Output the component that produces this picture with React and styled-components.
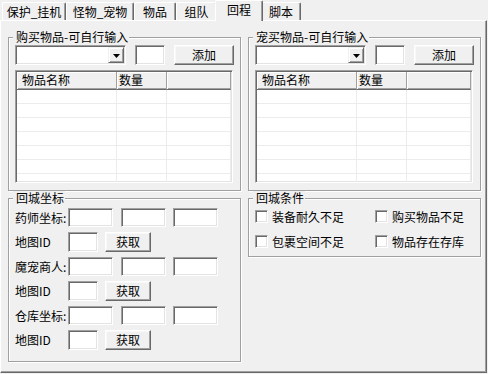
import React from 'react';
import styled, { createGlobalStyle, css } from 'styled-components';

const GlobalStyle = createGlobalStyle`
  html, body { margin: 0; padding: 0; background: #f0f0f0; }
  body {
    font-family: "Noto Sans CJK SC", "Liberation Sans", sans-serif;
    font-size: 12px;
    color: #000;
  }
  * { box-sizing: border-box; }
`;

const Window = styled.div`
  width: 488px;
  height: 374px;
  background: #f0f0f0;
  display: flex;
  flex-direction: column;
  overflow: hidden;
`;

const TabBar = styled.div`
  flex: none;
  display: flex;
  align-items: flex-end;
  height: 20px;
  padding-left: 2px;
`;

const Tab = styled.div`
  flex: none;
  width: ${(p) => p.$w}px;
  height: 18px;
  display: flex;
  align-items: center;
  justify-content: center;
  line-height: 14px;
  white-space: nowrap;
  border-top: 1px solid #fff;
  border-left: 1px solid #fff;
  border-right: 1px solid #696969;
  border-radius: 2px 2px 0 0;
  box-shadow: inset -1px 0 #a0a0a0;
  background: #f0f0f0;
  ${(p) =>
    p.$active &&
    css`
      position: relative;
      z-index: 1;
      width: ${p.$w + 4}px;
      height: 21px;
      margin: 0 -2px -1px;
      padding-bottom: 3px;
    `}
`;

const Panel = styled.div`
  flex: 1;
  margin: 0 1px 1px 0;
  border-top: 1px solid #fff;
  border-left: 1px solid #fff;
  border-right: 1px solid #696969;
  border-bottom: 1px solid #696969;
  box-shadow: inset -1px -1px #a0a0a0;
  padding: 9px 0 0 7px;
  display: grid;
  grid-template-columns: 233px 233px;
  column-gap: 7px;
  align-content: start;
  align-items: start;
`;

const Column = styled.div`
  display: flex;
  flex-direction: column;
`;

const Group = styled.fieldset`
  margin: 0;
  min-width: 0;
  border: 1px solid #a0a0a0;
  box-shadow: inset 1px 1px #fff, 1px 1px #fff;
  padding: ${(p) => p.$pad};
`;

const Legend = styled.legend`
  margin-left: -2px;
  padding: 0 1px 0 3px;
  line-height: 14px;
  background: #f0f0f0;
  white-space: nowrap;
`;

const AddRow = styled.div`
  display: flex;
  align-items: center;
  height: 20px;
  gap: 9px;
`;

const sunken = css`
  border: 1px solid;
  border-color: #a0a0a0 #fff #fff #a0a0a0;
  box-shadow: inset 1px 1px #696969, inset -1px -1px #e3e3e3;
  background: #fff;
`;

const raised = css`
  border: 1px solid;
  border-color: #fff #696969 #696969 #fff;
  box-shadow: inset -1px -1px #a0a0a0, inset 1px 1px #f8f8f8;
  background: #f0f0f0;
`;

const Combo = styled.div`
  ${sunken};
  flex: none;
  width: 111px;
  height: 20px;
  padding: 1px;
  display: flex;
  justify-content: flex-end;
`;

const DropBtn = styled.div`
  border: 1px solid;
  border-color: #f0f0f0 #696969 #696969 #f0f0f0;
  box-shadow: inset 1px 1px #fff, inset -1px -1px #a0a0a0;
  background: #f0f0f0;
  width: 16px;
  height: 16px;
  display: flex;
  align-items: center;
  justify-content: center;
  padding-top: 1px;
`;

const Field = styled.input`
  ${sunken};
  flex: none;
  width: ${(p) => p.$w}px;
  height: ${(p) => p.$h || 20}px;
  padding: 0 3px;
  margin: 0;
  font: inherit;
  outline: none;
`;

const Button = styled.button`
  ${raised};
  flex: none;
  width: ${(p) => p.$w}px;
  height: 20px;
  margin: 0;
  padding: 0 0 1px;
  font: inherit;
  line-height: 14px;
  color: #000;
`;

const ListView = styled.div`
  ${sunken};
  margin-top: 5px;
  height: 113px;
  padding: 1px;
  overflow: hidden;
`;

const cols = css`
  display: grid;
  grid-template-columns: 100px 50px 1fr;
`;

const HeaderRow = styled.div`
  ${cols};
  height: 18px;
`;

const HeaderCell = styled.div`
  background: #f0f0f0;
  border-right: 1px solid #a0a0a0;
  border-bottom: 1px solid #696969;
  box-shadow: inset 1px 1px #fff, inset 0 -1px #a0a0a0;
  padding: 1px 0 0 ${(p) => p.$indent}px;
  line-height: 14px;
  white-space: nowrap;
`;

const BodyRow = styled.div`
  ${cols};
  height: 14px;
  border-bottom: 1px solid #ececec;
`;

const BodyCell = styled.div`
  border-right: 1px solid #ececec;
`;

const Rows = styled.div`
  display: flex;
  flex-direction: column;
  gap: 5px;
`;

const FormRow = styled.div`
  display: flex;
  align-items: center;
  height: ${(p) => p.$h}px;
  gap: ${(p) => p.$gap}px;
`;

const Label = styled.span`
  flex: none;
  width: 53px;
  margin-right: ${(p) => -p.$gap}px;
  line-height: 14px;
  white-space: nowrap;
`;

const CheckGrid = styled.div`
  display: grid;
  grid-template-columns: 120px 1fr;
  row-gap: 12px;
`;

const Check = styled.label`
  display: flex;
  align-items: center;
  gap: 4px;
  height: 13px;
  line-height: 13px;
  white-space: nowrap;
`;

const Box = styled.span`
  ${sunken};
  flex: none;
  width: 13px;
  height: 13px;
`;

const tabs = [
  { label: '保护_挂机', w: 64 },
  { label: '怪物_宠物', w: 68 },
  { label: '物品', w: 42 },
  { label: '组队', w: 41 },
  { label: '回程', w: 44, active: true },
  { label: '脚本', w: 40 },
];

function ItemBox({ title }) {
  return (
    <Group $pad="1px 7px 7px 6px">
      <Legend>{title}</Legend>
      <AddRow>
        <Combo>
          <DropBtn>
            <svg width="7" height="4" viewBox="0 0 7 4">
              <path d="M0 0h7L3.5 4z" fill="#000" />
            </svg>
          </DropBtn>
        </Combo>
        <Field $w={30} />
        <Button $w={60}>添加</Button>
      </AddRow>
      <ListView>
        <HeaderRow>
          <HeaderCell $indent={5}>物品名称</HeaderCell>
          <HeaderCell $indent={2}>数量</HeaderCell>
          <HeaderCell $indent={2} />
        </HeaderRow>
        {Array.from({ length: 7 }).map((_, i) => (
          <BodyRow key={i}>
            <BodyCell />
            <BodyCell />
            <BodyCell />
          </BodyRow>
        ))}
      </ListView>
    </Group>
  );
}

function CoordRow({ label }) {
  return (
    <FormRow $h={19} $gap={7.5}>
      <Label $gap={7.5}>{label}</Label>
      <Field $w={45} $h={19} />
      <Field $w={45} $h={19} />
      <Field $w={45} $h={19} />
    </FormRow>
  );
}

function MapRow() {
  return (
    <FormRow $h={20} $gap={7}>
      <Label $gap={7}>地图ID</Label>
      <Field $w={30} $h={20} />
      <Button $w={46}>获取</Button>
    </FormRow>
  );
}

export default function App() {
  return (
    <>
      <GlobalStyle />
      <Window>
        <TabBar>
          {tabs.map((t) => (
            <Tab key={t.label} $w={t.w} $active={t.active}>
              {t.label}
            </Tab>
          ))}
        </TabBar>
        <Panel>
          <Column>
            <ItemBox title="购买物品-可自行输入" />
            <Group $pad="3px 7px 11px 6px">
              <Legend>回城坐标</Legend>
              <Rows>
                <CoordRow label="药师坐标:" />
                <MapRow />
                <CoordRow label="魔宠商人:" />
                <MapRow />
                <CoordRow label="仓库坐标:" />
                <MapRow />
              </Rows>
            </Group>
          </Column>
          <Column>
            <ItemBox title="宠买物品-可自行输入" />
            <Group $pad="5px 7px 8px 6px">
              <Legend>回城条件</Legend>
              <CheckGrid>
                <Check><Box />装备耐久不足</Check>
                <Check><Box />购买物品不足</Check>
                <Check><Box />包裹空间不足</Check>
                <Check><Box />物品存在存库</Check>
              </CheckGrid>
            </Group>
          </Column>
        </Panel>
      </Window>
    </>
  );
}
